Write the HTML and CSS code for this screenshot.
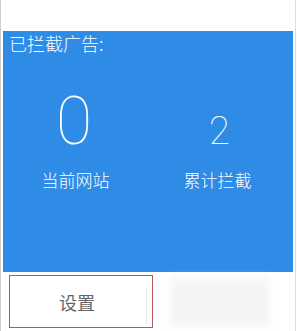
FILE: index.html
```html
<!DOCTYPE html>
<html>
<head>
<meta charset="utf-8">
<link rel="stylesheet" href="styles.css">
</head>
<body>
<div class="frame">
  <div class="panel">
    <div class="title">已拦截广告:</div>
    <div class="stats">
      <div class="num big">0</div>
      <div class="num small">2</div>
      <div class="label">当前网站</div>
      <div class="label right">累计拦截</div>
    </div>
  </div>
  <div class="actions">
    <div class="btn">设置<span class="divider"></span></div>
    <div class="blur"></div>
  </div>
</div>
</body>
</html>
```
FILE: styles.css
```css
html, body {
  margin: 0;
  padding: 0;
  background: #ffffff;
}
.frame {
  width: 296px;
  height: 331px;
  border-left: 1px solid #cfcfcf;
  border-right: 1px solid #dddddd;
  padding-top: 31px;
  box-sizing: border-box;
  font-family: "Noto Sans CJK SC", "Noto Sans", sans-serif;
}
.panel {
  margin-left: 2px;
  width: 290px;
  height: 241px;
  background: #2e8be6;
  color: #ffffff;
}
.title {
  font-size: 18px;
  font-weight: 300;
  line-height: 24px;
  padding-left: 6px;
}
.stats {
  display: grid;
  grid-template-columns: 1fr 1fr;
  align-items: baseline;
  justify-items: center;
  margin-top: 32px;
}
.num {
  font-family: "Roboto", sans-serif;
  font-weight: 100;
  line-height: 70px;
}
.big {
  font-size: 66px;
  margin-left: -3px;
}
.small {
  font-size: 38px;
  margin-left: -2px;
}
.label {
  font-size: 17px;
  line-height: 24px;
  margin-top: 2px;
  font-weight: 300;
}
.label.right {
  margin-left: -6px;
}
.actions {
  display: flex;
  margin-top: 3px;
}
.btn {
  position: relative;
  margin-left: 8px;
  width: 144px;
  height: 53px;
  border: 1px solid #b9575a;
  box-sizing: border-box;
  display: flex;
  align-items: center;
  justify-content: center;
  font-size: 18px;
  color: #666666;
  padding-right: 8px;
}
.divider {
  position: absolute;
  right: 5px;
  top: 12px;
  width: 1px;
  height: 36px;
  background: #e6e6e6;
}
.blur {
  margin-left: 18px;
  margin-top: 3px;
  width: 98px;
  height: 48px;
  background: #f4f4f4;
  filter: blur(4px);
}
```
